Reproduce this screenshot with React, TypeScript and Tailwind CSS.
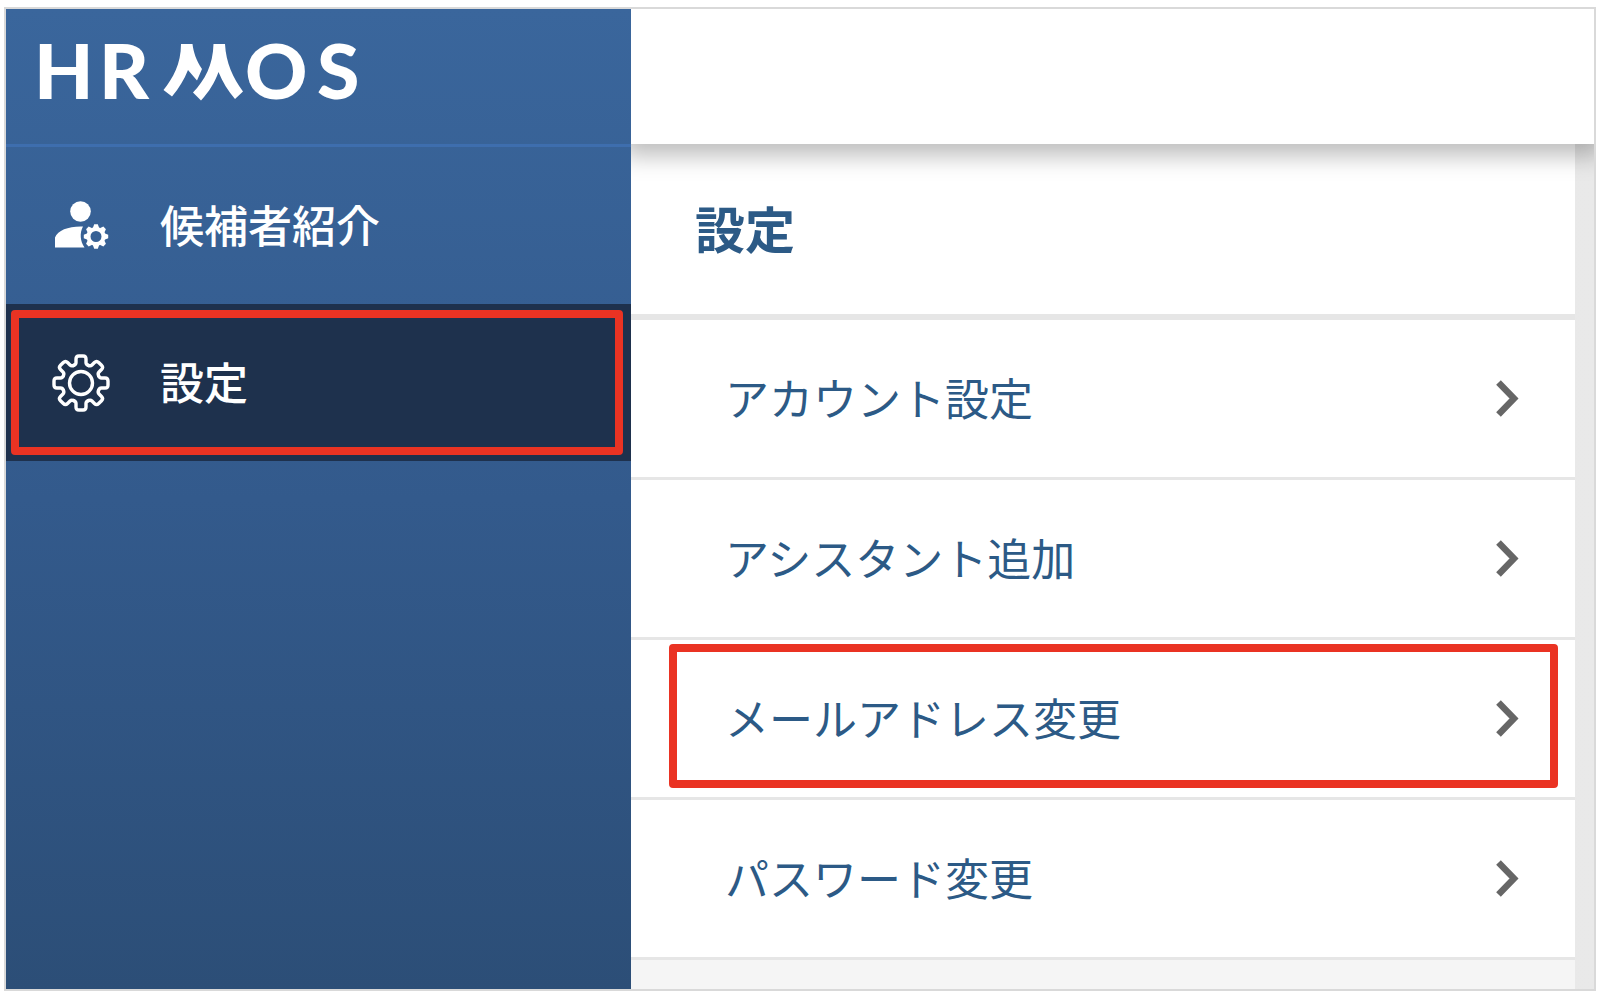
import React from "react";

const TEETH = [0, 45, 90, 135, 180, 225, 270, 315];

function Logo() {
  return (
    <svg
      viewBox="0 0 340 100"
      className="h-[100px] w-[340px]"
      fill="#fff"
      role="img"
      aria-label="HRMOS"
      fontFamily='Lato, "Liberation Sans", sans-serif'
      fontWeight="900"
      fontSize="77"
    >
      <text x="0" y="82">H</text>
      <text x="65" y="82">R</text>
      <g transform="translate(0 19)">
        <path d="M147 8H158.500C159.500 16 162 24 168 33L163 44.500L154 34C150 44 145 52 138 60.500L129.500 54C139 42 147 28 147 8Z" />
        <path d="M179.500 8H191C192 27 199 42 209 55.500L201 63C194 55 188.500 46 184.500 36C181 46 175 56 167 64.500L159 56.500C171 44 179 29 179.500 8Z" />
      </g>
      <text x="211" y="82">O</text>
      <text x="283" y="82">S</text>
    </svg>
  );
}

function UserGearIcon() {
  return (
    <svg viewBox="0 0 58 58" className="h-[58px] w-[58px] shrink-0" fill="#fff" aria-hidden="true">
      <circle cx="28.500" cy="14.500" r="10.300" />
      <path d="M3 50.500V40.500C6 33 17 29 31 29.500C27.500 36 28 44 32.500 50.500Z" />
      <g transform="translate(44 39.500)">
        <circle r="7.500" fill="none" stroke="#fff" strokeWidth="4" />
        {TEETH.map((a) => (
          <path key={a} d="M-3.200-8.500L-1.800-12.200H1.800L3.200-8.500Z" transform={`rotate(${a})`} />
        ))}
      </g>
    </svg>
  );
}

function GearIcon() {
  return (
    <svg
      viewBox="-29 -29 58 58"
      className="h-[58px] w-[58px] shrink-0"
      fill="none"
      stroke="#fff"
      strokeWidth="3.400"
      strokeLinecap="round"
      aria-hidden="true"
    >
      <circle r="11.500" />
      {TEETH.map((a) => (
        <path
          key={a}
          d="M-7.300-17.600Q-5-18.400-5-20.500V-24Q-5-27-2-27H2Q5-27 5-24V-20.500Q5-18.400 7.300-17.600"
          transform={`rotate(${a})`}
        />
      ))}
    </svg>
  );
}

function Chevron() {
  return (
    <svg viewBox="0 0 24 40" className="h-[40px] w-[24px] shrink-0" fill="none" stroke="#666" strokeWidth="6.500" aria-hidden="true">
      <path d="M3.500 3.500L19 19.500L3.500 35.500" />
    </svg>
  );
}

function Highlight({ className }: { className: string }) {
  return <span aria-hidden="true" className={`pointer-events-none absolute rounded-[4px] border-8 border-[#ea3323] ${className}`} />;
}

const NAV = [
  { label: "候補者紹介", icon: <UserGearIcon />, active: false },
  { label: "設定", icon: <GearIcon />, active: true },
];

const ROWS = [
  { label: "アカウント設定", marked: false },
  { label: "アシスタント追加", marked: false },
  { label: "メールアドレス変更", marked: true },
  { label: "パスワード変更", marked: false },
];

export default function App() {
  return (
    <div className='flex min-h-screen bg-white pt-[7px] pr-3 pb-[9px] pl-1 font-["Noto_Sans_CJK_JP",sans-serif]'>
      <div className="flex flex-1 border-2 border-[#d9d9d9]">
        <aside className="w-[625px] shrink-0 bg-linear-to-b from-[#3a669c] via-[#335a8c] to-[#2c4e77]">
          <div className="border-b-[3px] border-[#3e6eae] px-7 pt-2 pb-[27px]">
            <Logo />
          </div>
          <nav>
            {NAV.map((item) => (
              <a
                key={item.label}
                href="#"
                className={`relative flex items-center gap-[50px] py-12 pl-[46px] text-[44px] leading-[58px] font-medium text-white ${item.active ? "bg-[#1e314d]" : ""}`}
              >
                {item.icon}
                <span className="pb-[3px]">{item.label}</span>
                {item.active && <Highlight className="top-[6px] right-[8px] bottom-[6px] left-[5px]" />}
              </a>
            ))}
          </nav>
        </aside>
        <div className="flex min-w-0 flex-1 flex-col">
          <header className="relative z-10 h-[135px] bg-white shadow-[0_4px_22px_8px_rgba(0,0,0,0.26)] [clip-path:inset(0_0_-40px_0)]" />
          <div className="flex flex-1 bg-linear-to-r from-[#e3e3e3] to-[#e9e9e9] pr-[19px]">
            <main className="flex-1 bg-[#f5f5f5] text-[#2c5a86]">
              <h1 className="border-b-[6px] border-[#e6e6e6] bg-white pt-[46px] pb-[50px] pl-16 text-[50px] leading-[74px] font-bold">設定</h1>
              <ul>
                {ROWS.map((row) => (
                  <li key={row.label} className="border-b-[3px] border-[#e6e6e6] bg-white">
                    <a
                      href="#"
                      className="relative flex items-center justify-between py-12 pr-[56px] pl-[94px] text-[44px] leading-[58px]"
                    >
                      <span className="pb-[3px]">{row.label}</span>
                      <Chevron />
                      {row.marked && <Highlight className="top-[4px] right-[17px] bottom-[9px] left-[38px]" />}
                    </a>
                  </li>
                ))}
              </ul>
            </main>
          </div>
        </div>
      </div>
    </div>
  );
}
